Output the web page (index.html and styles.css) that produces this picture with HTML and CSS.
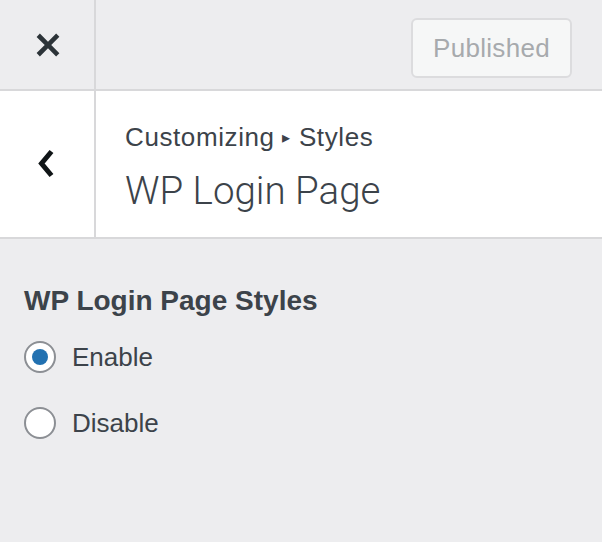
FILE: index.html
```html
<!DOCTYPE html>
<html lang="en">
<head>
<meta charset="utf-8">
<title>Customizer</title>
<link rel="stylesheet" href="styles.css">
</head>
<body>
<div class="panel">
  <div class="topbar">
    <button class="close-btn" aria-label="Close">
      <svg class="icon-close" width="46" height="46" viewBox="0 0 20 20"><path d="M14.95 6.46L11.41 10l3.54 3.54-1.42 1.41L10 11.42l-3.53 3.53-1.42-1.42L8.58 10 5.05 6.47l1.42-1.42L10 8.58l3.54-3.53z"/></svg>
    </button>
    <div class="topbar-actions">
      <button class="publish-btn" disabled>Published</button>
    </div>
  </div>
  <div class="section-header">
    <button class="back-btn" aria-label="Back">
      <svg class="icon-back" width="20" height="32" viewBox="0 0 20 32"><polyline points="14.5,3.5 4.5,15.5 14.5,27.5" fill="none" stroke="#101517" stroke-width="5" stroke-linejoin="miter" stroke-linecap="butt"/></svg>
    </button>
    <div class="section-title">
      <span class="crumb">Customizing <span class="arrow">▸</span> Styles</span>
      <h3 class="title">WP Login Page</h3>
    </div>
  </div>
  <div class="content">
    <div class="control-title">WP Login Page Styles</div>
    <label class="radio-row"><input type="radio" name="style" class="radio" checked><span class="radio-label">Enable</span></label>
    <label class="radio-row"><input type="radio" name="style" class="radio"><span class="radio-label">Disable</span></label>
  </div>
</div>
</body>
</html>
```

FILE: styles.css
```css
html, body {
  margin: 0;
  padding: 0;
  height: 100%;
}
body {
  font-family: "Liberation Sans", Arial, sans-serif;
  color: #3c434a;
  background: #ededef;
}
.panel {
  display: flex;
  flex-direction: column;
  min-height: 100%;
}
.topbar {
  display: flex;
  height: 89px;
  border-bottom: 2px solid #d8d8da;
  background: #ededef;
}
.close-btn {
  width: 96px;
  border: 0;
  border-right: 2px solid #d8d8da;
  background: transparent;
  padding: 0;
  display: flex;
  align-items: center;
  justify-content: center;
}
.icon-close {
  fill: #2c3338;
  margin-left: 2px;
  margin-top: 1px;
}
.topbar-actions {
  flex: 1;
  display: flex;
  justify-content: flex-end;
  align-items: flex-start;
  padding: 18px 30px 0 0;
}
.publish-btn {
  width: 161px;
  height: 60px;
  border: 2px solid #dcdcde;
  border-radius: 6px;
  background: #f6f7f7;
  color: #a7aaad;
  font-family: "Liberation Sans", Arial, sans-serif;
  font-size: 26px;
  letter-spacing: 0.3px;
  padding: 0;
}
.section-header {
  display: flex;
  height: 146px;
  background: #fff;
  border-bottom: 2px solid #d8d8da;
}
.back-btn {
  width: 96px;
  border: 0;
  border-right: 2px solid #d8d8da;
  background: transparent;
  padding: 0;
  display: flex;
  align-items: center;
  justify-content: center;
}
.icon-back {
  margin-left: -1px;
}
.section-title {
  display: flex;
  flex-direction: column;
  padding: 33px 0 0 29px;
}
.crumb {
  font-size: 26px;
  line-height: 26px;
  letter-spacing: 0.6px;
  color: #3c434a;
}
.arrow {
  font-size: 16px;
  vertical-align: 3px;
}
.title {
  margin: 20px 0 0;
  font-family: Roboto, "Liberation Sans", sans-serif;
  font-size: 38.5px;
  line-height: 40px;
  font-weight: 300;
  color: #3c434a;
}
.content {
  flex: 1;
  padding: 48px 24px 0;
  display: flex;
  flex-direction: column;
}
.control-title {
  font-size: 28px;
  line-height: 28px;
  font-weight: 700;
  color: #3c434a;
  margin-bottom: 26px;
}
.radio-row {
  display: flex;
  align-items: center;
  gap: 16px;
  margin-bottom: 34px;
}
.radio {
  appearance: none;
  -webkit-appearance: none;
  width: 32px;
  height: 32px;
  margin: 0;
  border: 2px solid #8c8f94;
  border-radius: 50%;
  background: #fff;
  display: flex;
  align-items: center;
  justify-content: center;
}
.radio:checked::before {
  content: "";
  width: 16px;
  height: 16px;
  border-radius: 50%;
  background: #2271b1;
}
.radio-label {
  font-size: 26px;
  color: #3c434a;
}
```
